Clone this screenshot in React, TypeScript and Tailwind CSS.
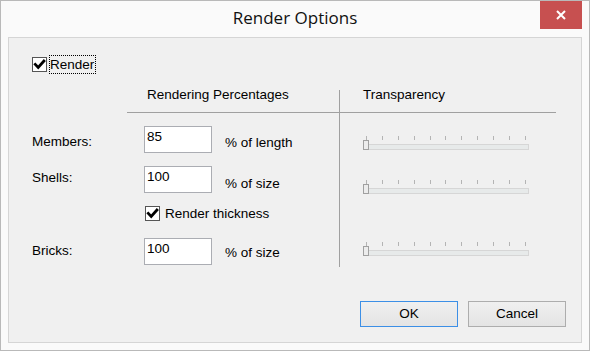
import React from "react";

const font = { fontFamily: '"Liberation Sans", Arial, sans-serif' };

function Check() {
  return (
    <div className="w-[15px] h-[15px] border border-[#555555] bg-white flex items-center justify-center">
      <svg width="13" height="13" viewBox="0 0 13 13">
        <path d="M2.3 6.4 L5.2 9.4 L10.9 3.1" fill="none" stroke="#000" strokeWidth="2.8" strokeLinecap="square" />
      </svg>
    </div>
  );
}

function Slider({ mt }: { mt: string }) {
  const ticks = Array.from({ length: 11 });
  return (
    <div className={`w-[166px] h-[14px] flex flex-col ${mt}`}>
      <div className="h-[4px] flex justify-between px-[3px]">
        {ticks.map((_, i) => (
          <div key={i} className="w-px h-[4px] bg-[#b4b4b4]" />
        ))}
      </div>
      <div className="relative h-[10px] flex flex-col justify-end">
        <div className="h-[6px] border border-[#d6d6d6] bg-[#e7eaea]" />
        <div className="absolute left-0 top-0 w-[6px] h-[10px] border border-[#a0a0a0] bg-[#ececec]" />
      </div>
    </div>
  );
}

function Row({
  label,
  value,
  unit,
  lpt,
  upt,
  mt,
}: {
  label: string;
  value: string;
  unit: string;
  lpt: string;
  upt: string;
  mt: string;
}) {
  return (
    <div className={`flex items-start h-[27px] ${mt}`}>
      <div className={`w-[113px] pl-[1px] leading-[15px] ${lpt}`}>{label}</div>
      <div className="w-[68px] h-[27px] border border-[#abadb3] bg-white pl-[2px] pt-[2px] leading-[15px]">
        {value}
      </div>
      <div className={`ml-[13px] leading-[15px] ${upt}`}>{unit}</div>
    </div>
  );
}

export default function App() {
  return (
    <div
      className="w-[590px] h-[351px] border border-[#b9b9b9] bg-[#fafafa] flex flex-col text-[13.5px] text-black"
      style={font}
    >
      <div className="h-[36px] grid grid-cols-[1fr_auto_1fr]">
        <div />
        <div
          className="pt-[6px] text-[17px] leading-[22px] text-[#111]"
          style={{ fontFamily: '"Open Sans", "Noto Sans", sans-serif' }}
        >
          Render Options
        </div>
        <div className="flex justify-end items-start">
          <div className="mr-[7px] w-[42px] h-[28px] bg-[#c75050] flex items-center justify-center">
            <svg width="10" height="10" viewBox="0 0 10 10">
              <path d="M1 1 L9 9 M9 1 L1 9" stroke="#fff" strokeWidth="2" />
            </svg>
          </div>
        </div>
      </div>

      <div className="mx-[7px] h-[306px] border border-[#d5d5d5] bg-[#f0f0f0] flex flex-col pl-[22px] pt-[16px]">
        <div className="h-[20px] flex items-center">
          <div className="ml-[1px]">
            <Check />
          </div>
          <span className="ml-[2px] border border-dotted border-black pr-[1px] leading-[17px]">Render</span>
        </div>

        <div className="mt-[13px] flex">
          <div className="w-[308px] flex flex-col pb-[2px]">
            <div className="pl-[116px] leading-[15px]">Rendering Percentages</div>
            <div className="mt-[10px] ml-[96px] h-px bg-[#a0a0a0]" />
            <Row label="Members:" value="85" unit="% of length" lpt="pt-[8px]" upt="pt-[9px]" mt="mt-[13px]" />
            <Row label="Shells:" value="100" unit="% of size" lpt="pt-[4px]" upt="pt-[10px]" mt="mt-[13px]" />
            <div className="mt-[13px] ml-[114px] h-[15px] flex items-center">
              <Check />
              <span className="ml-[5px] leading-[15px]">Render thickness</span>
            </div>
            <Row label="Bricks:" value="100" unit="% of size" lpt="pt-[5px]" upt="pt-[7px]" mt="mt-[17px]" />
          </div>
          <div className="mt-[3px] w-px bg-[#a0a0a0]" />
          <div className="flex flex-col">
            <div className="pl-[23px] leading-[15px]">Transparency</div>
            <div className="mt-[10px] w-[216px] h-px bg-[#a0a0a0]" />
            <div className="pl-[23px] flex flex-col">
              <Slider mt="mt-[23px]" />
              <Slider mt="mt-[30px]" />
              <Slider mt="mt-[48px]" />
            </div>
          </div>
        </div>

        <div className="mt-[34px] flex justify-end pr-[15px] gap-[10px]">
          <div className="w-[98px] h-[26px] border border-[#3c8fe6] bg-linear-to-b from-[#f0f0f0] to-[#e4e4e4] flex items-center justify-center">
            OK
          </div>
          <div className="w-[98px] h-[26px] border border-[#adadad] bg-linear-to-b from-[#f0f0f0] to-[#e4e4e4] flex items-center justify-center">
            Cancel
          </div>
        </div>
      </div>
    </div>
  );
}
